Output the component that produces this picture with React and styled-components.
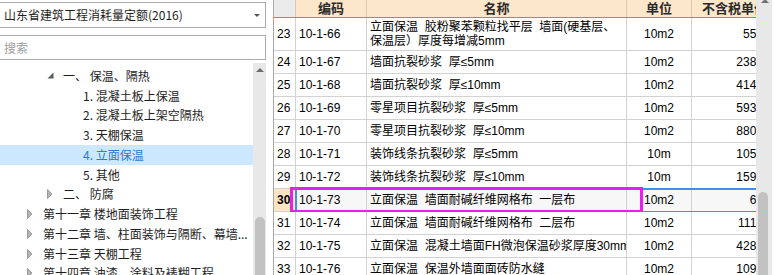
import React from 'react';
import styled, { createGlobalStyle } from 'styled-components';

const GlobalStyle = createGlobalStyle`
  html, body {
    margin: 0;
    padding: 0;
    background: #ffffff;
    overflow: hidden;
  }
  * {
    box-sizing: border-box;
  }
`;

const CJK = `"Noto Sans CJK SC", "Noto Sans", sans-serif`;
const GRID_FONT = `"Liberation Sans", "Noto Sans CJK SC", sans-serif`;

const COLS = [22, 71, 260, 65, 86];

const Page = styled.div`
  display: flex;
  width: 775px;
  height: 275px;
  overflow: hidden;
  background: #fff;
`;

/* ---------- left panel ---------- */

const LeftPanel = styled.div`
  width: 266px;
  flex: none;
  display: flex;
  flex-direction: column;
  padding-top: 2px;
  margin-right: 7px;
  font-family: ${CJK};
  font-size: 12px;
  color: #1e1e1e;
`;

const Field = styled.div`
  height: ${(p) => p.$h}px;
  margin-left: -1px;
  margin-bottom: ${(p) => p.$mb || 0}px;
  border: 1px solid #ababab;
  display: flex;
  align-items: center;
  padding-left: 4px;
  padding-right: 4px;
  color: ${(p) => (p.$placeholder ? '#a0a0a0' : '#1e1e1e')};
  line-height: 16px;
`;

const FieldText = styled.span`
  flex: 1;
  white-space: nowrap;
  overflow: hidden;
`;

const Tree = styled.div`
  flex: 1;
  display: flex;
  min-height: 0;
`;

const TreeList = styled.div`
  flex: 1;
  min-width: 0;
  overflow: hidden;
  padding-top: 3px;
`;

const TreeRow = styled.div`
  height: 19.75px;
  display: flex;
  align-items: center;
  padding-left: ${(p) => 27 + (p.$level - 1) * 20}px;
  background: ${(p) => (p.$selected ? '#cce8ff' : 'transparent')};
  color: ${(p) => (p.$selected ? '#2b79d8' : '#1e1e1e')};
  line-height: 16px;
`;

const Toggle = styled.span`
  width: 16px;
  flex: none;
  display: flex;
  align-items: center;
`;

const TreeLabel = styled.span`
  flex: 1;
  min-width: 0;
  white-space: pre;
  overflow: hidden;
`;

const ScrollTrack = styled.div`
  width: ${(p) => p.$w}px;
  flex: none;
  background: #e8e8e8;
  position: relative;
  margin-right: ${(p) => p.$mr || 0}px;
`;

const ScrollThumb = styled.div`
  position: absolute;
  left: ${(p) => p.$left}px;
  width: ${(p) => p.$w}px;
  top: ${(p) => p.$top}px;
  bottom: 0;
  background: #c2c2c2;
  border-radius: 5px 5px 0 0;
`;

const ArrowUp = styled.div`
  position: absolute;
  left: ${(p) => p.$left}px;
  top: ${(p) => p.$top}px;
  width: 0;
  height: 0;
  border-left: 4px solid transparent;
  border-right: 4px solid transparent;
  border-bottom: 4px solid #6f6f6f;
`;

const DropArrow = styled.span`
  width: 0;
  height: 0;
  border-left: 3px solid transparent;
  border-right: 3px solid transparent;
  border-top: 3px solid #555;
  margin-right: 1px;
`;

const Expanded = () => (
  <svg width="7" height="7" viewBox="0 0 7 7">
    <polygon points="6.5,0.5 6.5,6.5 0.5,6.5" fill="#5a5a5a" />
  </svg>
);

const Collapsed = () => (
  <svg width="6" height="10" viewBox="0 0 6 10">
    <polygon points="0.5,0.5 5,5 0.5,9.5" fill="#b4b4b4" stroke="#8c8c8c" strokeWidth="0.8" />
  </svg>
);

const treeItems = [
  { level: 2, label: '一、 保温、隔热', toggle: 'open' },
  { level: 3, label: '1. 混凝土板上保温' },
  { level: 3, label: '2. 混凝土板上架空隔热' },
  { level: 3, label: '3. 天棚保温' },
  { level: 3, label: '4. 立面保温', selected: true },
  { level: 3, label: '5. 其他' },
  { level: 2, label: '二、 防腐', toggle: 'closed' },
  { level: 1, label: '第十一章 楼地面装饰工程', toggle: 'closed' },
  { level: 1, label: '第十二章 墙、柱面装饰与隔断、幕墙...', toggle: 'closed' },
  { level: 1, label: '第十三章 天棚工程', toggle: 'closed' },
  { level: 1, label: '第十四章 油漆、涂料及裱糊工程', toggle: 'closed' },
];

/* ---------- grid ---------- */

const GridArea = styled.div`
  flex: 1;
  min-width: 0;
  display: flex;
  border-left: 1px solid #a9a9a9;
`;

const Table = styled.div`
  flex: 1;
  min-width: 0;
  overflow: hidden;
  font-family: ${GRID_FONT};
  font-size: 12px;
  color: #000;
`;

const Row = styled.div`
  display: flex;
  width: max-content;
  height: ${(p) => p.$h}px;
  position: relative;
`;

const HeadRow = styled(Row)`
  border-bottom: 1px solid #5b9ae2;
`;

const Cell = styled.div`
  width: ${(p) => p.$w}px;
  flex: none;
  height: 100%;
  display: flex;
  align-items: center;
  justify-content: ${(p) => p.$justify || 'flex-start'};
  padding: 0 ${(p) => (p.$justify === 'flex-end' ? 4 : 3)}px 0 ${(p) => (p.$justify === 'flex-end' ? 0 : 3)}px;
  border-right: 1px solid #d2d2d2;
  border-bottom: 1px solid #d2d2d2;
  background: ${(p) => p.$bg || '#fff'};
  white-space: pre;
  overflow: hidden;
  line-height: 14px;
  font-weight: ${(p) => (p.$bold ? 700 : 400)};
`;

const HeadCell = styled.div`
  width: ${(p) => p.$w}px;
  flex: none;
  height: 100%;
  display: flex;
  align-items: flex-end;
  justify-content: center;
  border-right: 1px solid #d8c9b3;
  background: ${(p) => p.$bg};
  font-family: ${CJK};
  font-size: 13px;
  font-weight: 700;
  color: #2a2a2a;
  line-height: 18px;
  overflow: hidden;
  white-space: nowrap;
`;

const SelectFrame = styled.div`
  position: absolute;
  left: ${COLS[0] - 1}px;
  right: 0;
  top: -1px;
  bottom: -1px;
  border-top: 2px solid #3f8ef0;
  border-bottom: 2px solid #3f8ef0;
  border-left: 2px solid #3f8ef0;
  pointer-events: none;
`;

const Highlight = styled.div`
  position: absolute;
  left: 16px;
  top: -2px;
  width: 353px;
  height: 26px;
  border: 3px solid #e620e6;
  pointer-events: none;
`;

const rows = [
  { n: 23, code: '10-1-66', name: '立面保温  胶粉聚苯颗粒找平层  墙面(硬基层、\n保温层）厚度每增减5mm', unit: '10m2', price: '55.32', h: 33 },
  { n: 24, code: '10-1-67', name: '墙面抗裂砂浆  厚≤5mm', unit: '10m2', price: '238.71' },
  { n: 25, code: '10-1-68', name: '墙面抗裂砂浆  厚≤10mm', unit: '10m2', price: '414.36' },
  { n: 26, code: '10-1-69', name: '零星项目抗裂砂浆  厚≤5mm', unit: '10m2', price: '593.25' },
  { n: 27, code: '10-1-70', name: '零星项目抗裂砂浆  厚≤10mm', unit: '10m2', price: '880.47' },
  { n: 28, code: '10-1-71', name: '装饰线条抗裂砂浆  厚≤5mm', unit: '10m', price: '105.86' },
  { n: 29, code: '10-1-72', name: '装饰线条抗裂砂浆  厚≤10mm', unit: '10m', price: '159.12' },
  { n: 30, code: '10-1-73', name: '立面保温  墙面耐碱纤维网格布  一层布', unit: '10m2', price: '6.45', selected: true },
  { n: 31, code: '10-1-74', name: '立面保温  墙面耐碱纤维网格布  二层布', unit: '10m2', price: '111.90' },
  { n: 32, code: '10-1-75', name: '立面保温  混凝土墙面FH微泡保温砂浆厚度30mm', unit: '10m2', price: '428.64' },
  { n: 33, code: '10-1-76', name: '立面保温  保温外墙面面砖防水缝', unit: '10m2', price: '109.58' },
];

const headers = ['', '编码', '名称', '单位', '不含税单价'];

const App = () => (
  <Page>
    <GlobalStyle />
    <LeftPanel>
      <Field $h={26} $mb={7}>
        <FieldText>山东省建筑工程消耗量定额(2016)</FieldText>
        <DropArrow />
      </Field>
      <Field $h={25} $mb={3} $placeholder>
        <FieldText>搜索</FieldText>
      </Field>
      <Tree>
        <TreeList>
          {treeItems.map((item) => (
            <TreeRow key={item.label} $level={item.level} $selected={item.selected}>
              <Toggle>
                {item.toggle === 'open' && <Expanded />}
                {item.toggle === 'closed' && <Collapsed />}
              </Toggle>
              <TreeLabel>{item.label}</TreeLabel>
            </TreeRow>
          ))}
        </TreeList>
        <ScrollTrack $w={13}>
          <ArrowUp $left={3} $top={5} />
          <ScrollThumb $left={2} $w={10} $top={154} />
        </ScrollTrack>
      </Tree>
    </LeftPanel>

    <GridArea>
      <Table>
        <HeadRow $h={18}>
          {headers.map((h, i) => (
            <HeadCell key={i} $w={COLS[i]} $bg={i === 0 ? '#ebebeb' : '#fde7cb'}>
              {h}
            </HeadCell>
          ))}
        </HeadRow>
        {rows.map((r) => (
          <Row key={r.n} $h={r.h || 23}>
            <Cell $w={COLS[0]} $bg={r.selected ? '#fde4c4' : '#fff'} $bold={r.selected}>
              {r.n}
            </Cell>
            <Cell $w={COLS[1]} $bg={r.selected ? '#f7f7f7' : '#fff'}>{r.code}</Cell>
            <Cell $w={COLS[2]} $bg={r.selected ? '#f7f7f7' : '#fff'}>{r.name}</Cell>
            <Cell $w={COLS[3]} $justify="center" $bg={r.selected ? '#f7f7f7' : '#fff'}>{r.unit}</Cell>
            <Cell $w={COLS[4]} $justify="flex-end" $bg={r.selected ? '#f7f7f7' : '#fff'}>{r.price}</Cell>
            {r.selected && <SelectFrame />}
            {r.selected && <Highlight />}
          </Row>
        ))}
      </Table>
      <ScrollTrack $w={16} $mr={3}>
        <ArrowUp $left={5} $top={-1} />
        <ScrollThumb $left={2} $w={10} $top={192} />
      </ScrollTrack>
    </GridArea>
  </Page>
);

export default App;
